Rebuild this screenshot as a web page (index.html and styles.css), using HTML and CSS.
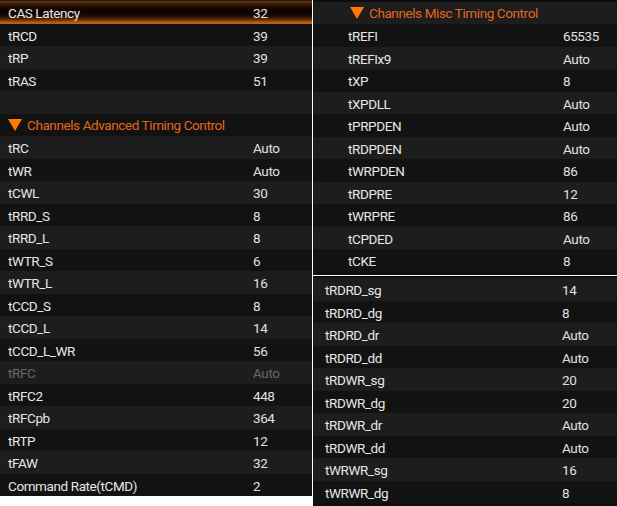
FILE: index.html
```html
<!DOCTYPE html>
<html>
<head>
<meta charset="utf-8">
<link rel="stylesheet" href="styles.css">
</head>
<body>
<div class="shot">
  <section class="panel left">
    <div class="row sel"><span class="lbl">CAS Latency</span><span class="val">32</span></div>
    <div class="row d"><span class="lbl">tRCD</span><span class="val">39</span></div>
    <div class="row l"><span class="lbl">tRP</span><span class="val">39</span></div>
    <div class="row d"><span class="lbl">tRAS</span><span class="val">51</span></div>
    <div class="row l"></div>
    <div class="row d head"><span class="tri"></span><span class="htxt">Channels Advanced Timing Control</span></div>
    <div class="row l"><span class="lbl">tRC</span><span class="val">Auto</span></div>
    <div class="row d"><span class="lbl">tWR</span><span class="val">Auto</span></div>
    <div class="row l"><span class="lbl">tCWL</span><span class="val">30</span></div>
    <div class="row d"><span class="lbl">tRRD_S</span><span class="val">8</span></div>
    <div class="row l"><span class="lbl">tRRD_L</span><span class="val">8</span></div>
    <div class="row d"><span class="lbl">tWTR_S</span><span class="val">6</span></div>
    <div class="row l"><span class="lbl">tWTR_L</span><span class="val">16</span></div>
    <div class="row d"><span class="lbl">tCCD_S</span><span class="val">8</span></div>
    <div class="row l"><span class="lbl">tCCD_L</span><span class="val">14</span></div>
    <div class="row d"><span class="lbl">tCCD_L_WR</span><span class="val">56</span></div>
    <div class="row l dim"><span class="lbl">tRFC</span><span class="val">Auto</span></div>
    <div class="row d"><span class="lbl">tRFC2</span><span class="val">448</span></div>
    <div class="row l"><span class="lbl">tRFCpb</span><span class="val">364</span></div>
    <div class="row d"><span class="lbl">tRTP</span><span class="val">12</span></div>
    <div class="row l"><span class="lbl">tFAW</span><span class="val">32</span></div>
    <div class="row d"><span class="lbl">Command Rate(tCMD)</span><span class="val">2</span></div>
  </section>
  <div class="right">
    <section class="panel rtop">
      <div class="row l head"><span class="tri"></span><span class="htxt">Channels Misc Timing Control</span></div>
      <div class="row d"><span class="lbl">tREFI</span><span class="val">65535</span></div>
      <div class="row l"><span class="lbl">tREFIx9</span><span class="val">Auto</span></div>
      <div class="row d"><span class="lbl">tXP</span><span class="val">8</span></div>
      <div class="row l"><span class="lbl">tXPDLL</span><span class="val">Auto</span></div>
      <div class="row d"><span class="lbl">tPRPDEN</span><span class="val">Auto</span></div>
      <div class="row l"><span class="lbl">tRDPDEN</span><span class="val">Auto</span></div>
      <div class="row d"><span class="lbl">tWRPDEN</span><span class="val">86</span></div>
      <div class="row l"><span class="lbl">tRDPRE</span><span class="val">12</span></div>
      <div class="row d"><span class="lbl">tWRPRE</span><span class="val">86</span></div>
      <div class="row l"><span class="lbl">tCPDED</span><span class="val">Auto</span></div>
      <div class="row d"><span class="lbl">tCKE</span><span class="val">8</span></div>
    </section>
    <section class="panel rbot">
      <div class="row l"><span class="lbl">tRDRD_sg</span><span class="val">14</span></div>
      <div class="row d"><span class="lbl">tRDRD_dg</span><span class="val">8</span></div>
      <div class="row l"><span class="lbl">tRDRD_dr</span><span class="val">Auto</span></div>
      <div class="row d"><span class="lbl">tRDRD_dd</span><span class="val">Auto</span></div>
      <div class="row l"><span class="lbl">tRDWR_sg</span><span class="val">20</span></div>
      <div class="row d"><span class="lbl">tRDWR_dg</span><span class="val">20</span></div>
      <div class="row l"><span class="lbl">tRDWR_dr</span><span class="val">Auto</span></div>
      <div class="row d"><span class="lbl">tRDWR_dd</span><span class="val">Auto</span></div>
      <div class="row l"><span class="lbl">tWRWR_sg</span><span class="val">16</span></div>
      <div class="row d"><span class="lbl">tWRWR_dg</span><span class="val">8</span></div>
    </section>
  </div>
</div>
</body>
</html>
```
FILE: styles.css
```css
html, body {
  margin: 0;
  padding: 0;
  background: #ffffff;
}
body {
  font-family: Roboto, "Liberation Sans", sans-serif;
  font-size: 13.5px;
  letter-spacing: -0.4px;
  color: #e6e6e6;
}
.shot {
  display: flex;
  width: 617px;
  height: 506px;
  gap: 1px;
  align-items: flex-start;
}
.panel {
  background: #111111;
  display: flex;
  flex-direction: column;
}
.left {
  width: 312px;
  height: 495px;
  padding-top: 1px;
  box-sizing: border-box;
  background: #1b1b1b;
}
.right {
  width: 304px;
  height: 506px;
  display: flex;
  flex-direction: column;
  gap: 1px;
}
.rtop {
  height: 275px;
  padding-top: 1.5px;
  box-sizing: border-box;
  background: #0e0e0e;
}
.rbot {
  height: 230px;
  padding-top: 2px;
  box-sizing: border-box;
  background: #0e0e0e;
}
.row {
  height: 22.5px;
  flex: 0 0 22.5px;
  display: flex;
  align-items: center;
  padding-top: 2px;
  box-sizing: border-box;
}
.row.d { background: #121212; }
.row.l { background: #1d1d1d; }
.row.sel {
  background: linear-gradient(to bottom, #6e3c12 0%, #3a1a06 12%, #140800 30%, #0c0400 50%, #1e0c02 65%, #5a2a08 80%, #b55c10 93%, #c0620f 100%);
}
.lbl { display: block; }
.left .lbl { width: 253px; padding-left: 8px; box-sizing: border-box; }
.rtop .lbl { width: 250px; padding-left: 35px; box-sizing: border-box; }
.rbot .lbl { width: 249px; padding-left: 12px; box-sizing: border-box; }
.val { color: #e0e0e0; }
.dim .lbl, .dim .val { color: #686868; }
.head { color: #e2661c; padding-top: 1px; }
.tri {
  width: 0;
  height: 0;
  border-left: 7px solid transparent;
  border-right: 7px solid transparent;
  border-top: 12px solid #ff7a00;
  margin-right: 5px;
}
.left .tri { margin-left: 8px; }
.rtop .tri { margin-left: 37px; }
.htxt { display: block; }
```
